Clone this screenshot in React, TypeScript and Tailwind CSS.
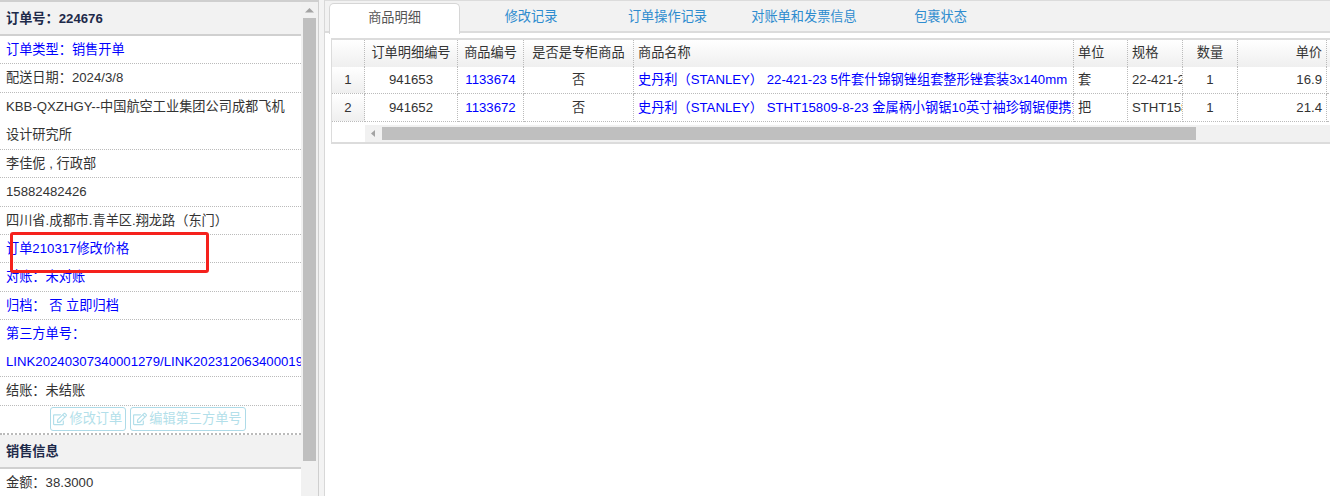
import { FaRegEdit } from "react-icons/fa";

const font = { fontFamily: '"Liberation Sans", "Noto Sans CJK SC", sans-serif' };

function Row({ children, blue, tall, noBorder }: { children: React.ReactNode; blue?: boolean; tall?: boolean; noBorder?: boolean }) {
  return (
    <div
      className={`px-[6px] whitespace-nowrap overflow-hidden leading-[28.35px] ${noBorder ? "" : "border-b border-dotted border-[#bbb]"} ${blue ? "text-[#0000ff]" : "text-[#333]"}`}
      style={{ height: tall ? 57 : 28.4, boxSizing: "border-box" }}
    >
      {children}
    </div>
  );
}

function SectionHead({ children }: { children: React.ReactNode }) {
  return (
    <div className="h-[34px] leading-[33px] px-[6px] font-bold text-[#1e2a4a] bg-[#f2f2f2] border-b-2 border-[#d0d0d0] shrink-0">
      {children}
    </div>
  );
}

function EditBtn({ label }: { label: string }) {
  return (
    <div className="h-[24px] pl-[2px] pr-[3px] flex items-center gap-[2px] rounded-[3px] border border-[#aedbe8] text-[#b3dfea] bg-white">
      <FaRegEdit className="w-[14px] h-[14px]" />
      <span>{label}</span>
    </div>
  );
}

const cols = [33, 93, 66, 110, 440, 54, 55, 55, 89, 4];
const th = "border-r border-dotted border-[#bbb] px-[4px] pb-[1px] font-normal text-[#333] overflow-hidden whitespace-nowrap";
const td = "border-r border-b border-dotted border-[#bbb] px-[4px] overflow-hidden whitespace-nowrap";

const rows = [
  ["1", "941653", "1133674", "否", "史丹利（STANLEY） 22-421-23 5件套什锦钢锉组套整形锉套装3x140mm", "套", "22-421-23", "1", "16.9"],
  ["2", "941652", "1133672", "否", "史丹利（STANLEY） STHT15809-8-23 金属柄小钢锯10英寸袖珍钢锯便携式", "把", "STHT15809", "1", "21.4"],
];

export default function App() {
  return (
    <div className="relative flex w-[1330px] h-[496px] overflow-hidden bg-white text-[13.2px]" style={font}>
      {/* Left panel */}
      <div className="flex w-[319px] h-full shrink-0 border-t-2 border-r border-[#cfcfcf]">
        <div className="w-[301px] h-full overflow-hidden shrink-0">
          <SectionHead>订单号：224676</SectionHead>
          <Row blue>订单类型：销售开单</Row>
          <Row>配送日期：2024/3/8</Row>
          <Row tall>
            KBB-QXZHGY--中国航空工业集团公司成都飞机
            <br />
            设计研究所
          </Row>
          <Row>李佳伲 , 行政部</Row>
          <Row>15882482426</Row>
          <Row>四川省.成都市.青羊区.翔龙路（东门）</Row>
          <Row blue>订单210317修改价格</Row>
          <Row blue>对账：未对账</Row>
          <Row blue>归档：&nbsp;否 立即归档</Row>
          <Row blue tall>
            第三方单号：
            <br />
            LINK20240307340001279/LINK20231206340001979
          </Row>
          <Row>结账：未结账</Row>
          <div className="h-[29px] flex items-center justify-center gap-[4px] border-b-2 border-dotted border-[#bbb] pr-[5px]">
            <EditBtn label="修改订单" />
            <EditBtn label="编辑第三方单号" />
          </div>
          <SectionHead>销售信息</SectionHead>
          <Row noBorder>金额：38.3000</Row>
        </div>
        {/* Scrollbar */}
        <div className="w-[17px] h-full bg-[#f1f1f1] flex flex-col items-center shrink-0">
          <svg className="w-[17px] h-[16px] shrink-0" viewBox="0 0 17 16">
            <path d="M4 10.5 L13 10.5 L8.5 6 Z" fill="#a3a3a3" />
          </svg>
          <div className="w-[13px] h-[443px] bg-[#bfbfbf]" />
        </div>
      </div>
      <div className="w-[6px] h-full bg-[#f3f3f3] border-r border-[#d8d8d8] shrink-0" />

      {/* Right panel */}
      <div className="flex-1 min-w-0 h-full flex flex-col">
        <div className="h-[33px] shrink-0 bg-[#f2f2f2] border-t border-b-2 border-[#dcdcdc] flex pl-[4px] gap-[5.5px]">
          {["商品明细", "修改记录", "订单操作记录", "对账单和发票信息", "包裹状态"].map((t, i) => (
            <div
              key={t}
              className={`w-[131px] h-[31px] mt-[2px] text-center leading-[28px] whitespace-nowrap shrink-0 ${
                i === 0
                  ? "bg-white text-[#555] border border-b-0 border-[#d6d6d6] rounded-t-[5px]"
                  : "text-[#2e8ccf]"
              }`}
            >
              {t}
            </div>
          ))}
        </div>
        <div className="ml-[6px] mt-[5px] border-t-2 border-b-2 border-l border-[#dcdcdc] h-[106px] flex flex-col overflow-hidden">
          <table className="table-fixed border-separate border-spacing-0 w-[999px] shrink-0 text-[#333]">
            <colgroup>
              {cols.map((w, i) => (
                <col key={i} style={{ width: w }} />
              ))}
            </colgroup>
            <thead>
              <tr className="h-[27px] bg-gradient-to-b from-white to-[#efefef]">
                <th className={th} />
                <th className={`${th} text-center`}>订单明细编号</th>
                <th className={`${th} text-center`}>商品编号</th>
                <th className={`${th} text-center`}>是否是专柜商品</th>
                <th className={`${th} text-left`}>商品名称</th>
                <th className={`${th} text-left`}>单位</th>
                <th className={`${th} text-left`}>规格</th>
                <th className={`${th} text-center`}>数量</th>
                <th className={`${th} text-right`}>单价</th>
                <th className={th} />
              </tr>
            </thead>
            <tbody>
              {rows.map((r) => (
                <tr key={r[0]} className={r[0] === "1" ? "h-[27px]" : "h-[28px]"}>
                  <td className={`${td} text-center bg-gradient-to-b from-white to-[#efefef]`}>{r[0]}</td>
                  <td className={`${td} text-center`}>{r[1]}</td>
                  <td className={`${td} text-center text-[#0000ff]`}>{r[2]}</td>
                  <td className={`${td} text-center`}>{r[3]}</td>
                  <td className={`${td} text-left text-[#0000ff]`}>{r[4]}</td>
                  <td className={`${td} text-left`}>{r[5]}</td>
                  <td className={`${td} text-left`}>{r[6]}</td>
                  <td className={`${td} text-center`}>{r[7]}</td>
                  <td className={`${td} text-right`}>{r[8]}</td>
                  <td className={td} />
                </tr>
              ))}
            </tbody>
          </table>
          <div className="flex h-[17px] mt-[3px] ml-[33px] bg-[#f1f1f1] items-center shrink-0">
            <svg className="w-[17px] h-[17px] shrink-0" viewBox="0 0 17 17">
              <path d="M6 8.5 L10 5 L10 12 Z" fill="#a3a3a3" />
            </svg>
            <div className="w-[814px] h-[13px] bg-[#bfbfbf]" />
          </div>
        </div>
      </div>

      {/* Red annotation */}
      <div className="absolute left-[10px] top-[232px] w-[199px] h-[41px] border-[3px] border-[#f5211d] rounded-[3px]" />
    </div>
  );
}
